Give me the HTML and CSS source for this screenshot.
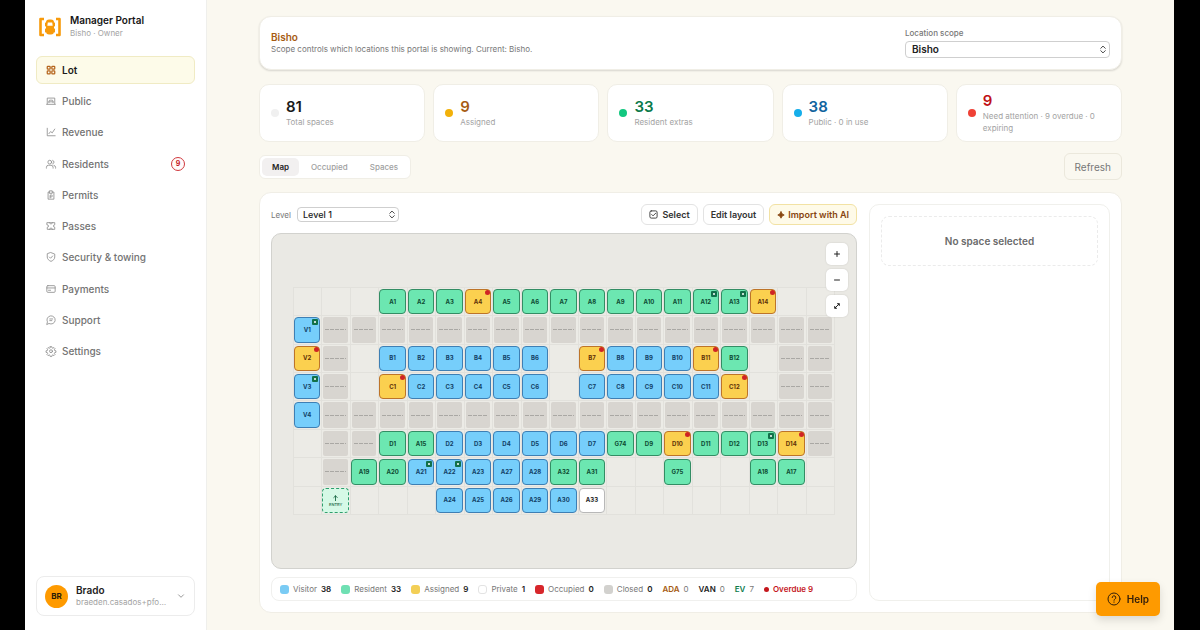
FILE: index.html
```html
<!DOCTYPE html>
<html lang="en">
<head>
<meta charset="utf-8">
<title>Manager Portal</title>
<link rel="stylesheet" href="styles.css">
</head>
<body>
<div class="app">
  <aside class="sidebar">
    <div class="brand">
      <svg class="brand-logo" viewBox="0 0 24 20">
        <path d="M6 2H2.500v16H6M18 2h3.500v16H18" stroke="#f79a0b" stroke-width="2.600" stroke-linecap="butt"/>
        <rect x="8" y="2.500" width="8" height="15" rx="3" fill="#f79a0b" stroke="none"/>
        <path d="M9.800 5.500h4.400l.5 3.200H9.300z" fill="#fff" stroke="none"/>
        <path d="M7.500 6v3M16.500 6v3M7.500 12v3M16.500 12v3" stroke="#f79a0b" stroke-width="1"/>
      </svg>
      <div>
        <div class="brand-name">Manager Portal</div>
        <div class="brand-sub">Bisho · Owner</div>
      </div>
    </div>
    <nav class="nav">
      <a class="nav-item active" href="#lot"><svg class="icon" viewBox="0 0 24 24"><rect x="3" y="3" width="7" height="7" rx="1.500"/><rect x="14" y="3" width="7" height="7" rx="1.500"/><rect x="3" y="14" width="7" height="7" rx="1.500"/><rect x="14" y="14" width="7" height="7" rx="1.500"/></svg>Lot</a>
      <a class="nav-item" href="#public"><svg class="icon" viewBox="0 0 24 24"><path d="M3 19V5h18v14M1.500 20h21"/><path d="M7 16v-3l1.500-3h7l1.500 3v3M7 14h10"/></svg>Public</a>
      <a class="nav-item" href="#revenue"><svg class="icon" viewBox="0 0 24 24"><path d="M3 3v18h19M7 16l4-5 4 3 6-9"/></svg>Revenue</a>
      <a class="nav-item" href="#residents"><svg class="icon" viewBox="0 0 24 24"><circle cx="9" cy="7.500" r="4.500"/><path d="M1 22v-2a5 5 0 0 1 5-5h6a5 5 0 0 1 5 5v2M16 3.200a4.500 4.500 0 0 1 0 8.600M19 15.200a5 5 0 0 1 4 4.800v2"/></svg>Residents<span class="count">9</span></a>
      <a class="nav-item" href="#permits"><svg class="icon" viewBox="0 0 24 24"><path d="M9 5H5v17h14V5h-4M9 2h6v6H9z"/><path d="M10 19v-7h3a2 2 0 0 1 0 4.500h-3"/></svg>Permits</a>
      <a class="nav-item" href="#passes"><svg class="icon" viewBox="0 0 24 24"><path d="M3 4h18v5a3 3 0 0 0 0 6v5H3v-5a3 3 0 0 0 0-6zM8 4c0 4 8 4 8 0M8 20c0-4 8-4 8 0"/></svg>Passes</a>
      <a class="nav-item" href="#security"><svg class="icon" viewBox="0 0 24 24"><path d="M12 1.500l9 3.500v7c0 5-4 8.500-9 10.500C7 20.500 3 17 3 12V5zM8 12l3 3 5-5.500"/></svg>Security &amp; towing</a>
      <a class="nav-item" href="#payments"><svg class="icon" viewBox="0 0 24 24"><rect x="2" y="4" width="20" height="16" rx="2.500"/><path d="M2 9.500h20M6 15h5"/></svg>Payments</a>
      <a class="nav-item" href="#support"><svg class="icon" viewBox="0 0 24 24"><path d="M2 22l1.500-5.500A9.800 9.800 0 1 1 8 20.800zM9 9.500h7M9 13.500h5"/></svg>Support</a>
      <a class="nav-item" href="#settings"><svg class="icon" viewBox="0 0 24 24"><path d="M10.200 1.500h3.600l.7 3.100 1.900.8 2.700-1.700 2.600 2.600-1.700 2.700.8 1.900 3.100.7v3.600l-3.100.7-.8 1.900 1.700 2.700-2.600 2.600-2.700-1.700-1.900.8-.7 3.100h-3.600l-.7-3.100-1.900-.8-2.700 1.700-2.600-2.600L4 17.800l-.8-1.900-3.100-.7v-3.600l3.100-.7L4 9 2.300 6.300l2.600-2.600 2.700 1.700 1.900-.8z"/><circle cx="12" cy="12.500" r="3.500"/></svg>Settings</a>
    </nav>
    <button class="user" type="button">
      <span class="avatar">BR</span>
      <span class="user-text"><span class="user-name">Brado</span><span class="user-mail">braeden.casados+pfo…</span></span>
      <svg class="chev" viewBox="0 0 8 8"><path d="M1.500 2.800L4 5.300l2.500-2.500"/></svg>
    </button>
  </aside>

  <main class="main">
    <section class="card scope">
      <div>
        <h1 class="scope-title">Bisho</h1>
        <p class="scope-text">Scope controls which locations this portal is showing. Current: Bisho.</p>
      </div>
      <div class="scope-field">
        <label for="scope">Location scope</label>
        <div class="select"><select id="scope"><option>Bisho</option></select><svg viewBox="0 0 8 10"><path d="M1.500 3.700L4 1.200l2.500 2.500M1.500 6.300L4 8.800l2.500-2.500"/></svg></div>
      </div>
    </section>

    <section class="stats">
      <div class="stat total"><i class="dot"></i><div><strong>81</strong><span>Total spaces</span></div></div>
      <div class="stat assigned"><i class="dot"></i><div><strong>9</strong><span>Assigned</span></div></div>
      <div class="stat extras"><i class="dot"></i><div><strong>33</strong><span>Resident extras</span></div></div>
      <div class="stat public"><i class="dot"></i><div><strong>38</strong><span>Public · 0 in use</span></div></div>
      <div class="stat attention"><i class="dot"></i><div><strong>9</strong><span>Need attention · 9 overdue · 0 expiring</span></div></div>
    </section>

    <div class="view-row">
      <div class="tabs">
        <button class="tab on" type="button">Map</button>
        <button class="tab" type="button">Occupied</button>
        <button class="tab" type="button">Spaces</button>
      </div>
      <button class="refresh" type="button">Refresh</button>
    </div>

    <section class="lot">
      <div class="lot-left">
        <div class="toolbar">
          <label for="level">Level</label>
          <div class="select level"><select id="level"><option>Level 1</option></select><svg viewBox="0 0 8 10"><path d="M1.500 3.700L4 1.200l2.500 2.500M1.500 6.300L4 8.800l2.500-2.500"/></svg></div>
          <div class="actions">
            <button class="btn" type="button"><svg viewBox="0 0 10 10"><rect x="1" y="1" width="8" height="8" rx="1.500"/><path d="M3 5l1.500 1.500L7.500 3.500"/></svg>Select</button>
            <button class="btn" type="button">Edit layout</button>
            <button class="btn ai" type="button"><svg class="spark" viewBox="0 0 10 10"><path d="M5 1Q5.800 4.200 9 5Q5.800 5.800 5 9Q4.200 5.800 1 5Q4.200 4.200 5 1z"/></svg>Import with AI</button>
          </div>
        </div>
        <div class="map">
          <div class="grid" id="grid"></div>
          <div class="zoom">
            <button type="button" aria-label="Zoom in"><svg viewBox="0 0 8 8"><path d="M4 1.500v5M1.500 4h5"/></svg></button>
            <button type="button" aria-label="Zoom out"><svg viewBox="0 0 8 8"><path d="M1.500 4h5"/></svg></button>
            <button type="button" aria-label="Fit"><svg viewBox="0 0 8 8"><path d="M2 6l4-4M4.500 1.700h1.800v1.800M1.700 4.500v1.800h1.800"/></svg></button>
          </div>
        </div>
        <div class="legend">
          <span><i class="sw visitor"></i>Visitor <b>38</b></span>
          <span><i class="sw resident"></i>Resident <b>33</b></span>
          <span><i class="sw gold"></i>Assigned <b>9</b></span>
          <span><i class="sw private"></i>Private <b>1</b></span>
          <span><i class="sw occupied"></i>Occupied <b>0</b></span>
          <span><i class="sw closed"></i>Closed <b>0</b></span>
          <span><b class="ada">ADA</b> 0</span>
          <span><b>VAN</b> 0</span>
          <span><b class="ev-text">EV</b> 7</span>
          <span class="overdue"><i class="odot"></i>Overdue 9</span>
        </div>
      </div>
      <aside class="detail"><div class="empty">No space selected</div></aside>
    </section>
  </main>
</div>
<button class="help" type="button"><svg viewBox="0 0 14 14"><circle cx="7" cy="7" r="6"/><path d="M5.200 5.600a1.800 1.800 0 1 1 2.600 1.600c-.6.300-.8.500-.8 1.100M7 9.900v.4"/></svg>Help</button>
<script src="map.js"></script>
</body>
</html>
```
FILE: styles.css
```css
* { box-sizing: border-box; }
body {
  margin: 0;
  padding: 0 26px 0 25px;
  background: #000;
  font-family: Inter, "Liberation Sans", sans-serif;
  font-size: 8px;
  line-height: 12px;
  color: #777;
}
button, select { font: inherit; color: inherit; }
h1, p { margin: 0; }
svg { fill: none; stroke: currentColor; stroke-linecap: round; stroke-linejoin: round; flex: none; }
.app { display: flex; min-height: 100vh; background: #faf8f0; }

.sidebar {
  width: 182px;
  flex: none;
  display: flex;
  flex-direction: column;
  padding: 14px 11px;
  background: #fff;
  border-right: 1px solid #efefec;
}
.brand { display: flex; align-items: center; gap: 8px; padding: 0 2px; margin-bottom: 17px; height: 25px; }
.brand-logo { width: 24px; height: 20px; }
.brand-name { font-size: 10px; font-weight: 600; line-height: 13px; color: #161616; }
.brand-sub { line-height: 12px; color: #a3a3a3; }
.nav { display: grid; align-content: space-between; min-height: 309px; }
.nav-item {
  display: flex;
  align-items: center;
  gap: 6px;
  height: 28px;
  padding: 0 9px;
  border: 1px solid transparent;
  border-radius: 6px;
  font-size: 10px;
  font-weight: 500;
  color: #737373;
  text-decoration: none;
}
.nav-item.active { background: #fdfbe9; border-color: #f0ebc4; color: #1c1c1c; font-weight: 600; }
.icon { width: 10px; height: 10px; stroke-width: 2; color: #8d8d8d; overflow: visible; }
.active .icon { color: #b5651d; stroke-width: 3; }
.count {
  margin-left: auto;
  width: 14px;
  height: 14px;
  border: 1px solid #d0393e;
  border-radius: 50%;
  background: #fffafa;
  color: #c4161c;
  font-size: 7px;
  font-weight: 700;
  line-height: 12px;
  text-align: center;
}
.user {
  display: flex;
  align-items: center;
  gap: 8px;
  margin-top: auto;
  height: 40px;
  padding: 0 9px 0 8px;
  border: 1px solid #ececec;
  border-radius: 8px;
  background: #fff;
  text-align: left;
}
.avatar { width: 23px; height: 23px; flex: none; border-radius: 50%; background: #fe9a00; color: #2b1a05; font-size: 8px; font-weight: 700; line-height: 23px; text-align: center; }
.user-text { flex: 1; min-width: 0; display: grid; }
.user-name { font-size: 10px; font-weight: 600; color: #222; }
.user-mail { color: #a3a3a3; white-space: nowrap; }
.chev { width: 8px; height: 8px; color: #999; }

.main { flex: 1; min-width: 0; display: flex; flex-direction: column; padding: 16px 52px 17px; }
.card, .stat, .lot { background: #fff; border: 1px solid #f0eee6; }
.scope {
  display: flex;
  justify-content: space-between;
  align-items: center;
  height: 54px;
  padding: 0 11px;
  border-radius: 12px;
  box-shadow: 0 1px 2px #00000024;
}
.scope-title { font-size: 10px; font-weight: 600; line-height: 12px; color: #a65b12; }
.scope-field { width: 205px; display: grid; gap: 2px; padding-bottom: 2px; font-weight: 500; }
.select { position: relative; }
.select select {
  display: block;
  width: 100%;
  height: 17px;
  padding: 0 6px;
  appearance: none;
  background: #fff;
  border: 1px solid #cfcfcf;
  border-radius: 4px;
  color: #222;
  font-size: 10px;
  font-weight: 600;
}
.select svg { position: absolute; right: 3px; top: 4px; width: 8px; height: 9px; color: #333; pointer-events: none; }

.stats { display: grid; grid-template-columns: repeat(5, 1fr); gap: 8px; margin: 14px 0 11px; }
.stat { display: flex; align-items: center; gap: 7px; height: 58px; padding: 0 11px; border-radius: 10px; color: #a3a3a3; }
.dot { width: 8px; height: 8px; flex: none; border-radius: 50%; }
.stat strong { display: block; font-size: 15px; font-weight: 600; line-height: 18px; }
.stat span { display: block; padding-bottom: 1px; }
.total .dot { background: #f0f0f0; } .total strong { color: #1a1a1a; }
.assigned .dot { background: #f2b10a; } .assigned strong { color: #a65b12; }
.extras .dot { background: #12c77f; } .extras strong { color: #0b7a4b; }
.public .dot { background: #15aeea; } .public strong { color: #10649e; }
.attention .dot { background: #ef4136; } .attention strong { color: #c01015; }

.view-row { display: flex; justify-content: space-between; align-items: center; margin-bottom: 12px; }
.tabs { display: flex; gap: 2px; height: 24px; padding: 2px; border: 1px solid #f0eee6; border-radius: 6px; background: #fff; }
.tab { padding: 0 10px; border: 0; border-radius: 5px; background: none; font-weight: 500; color: #a0a0a0; }
.tab.on { background: #f2f0f0; color: #222; font-weight: 600; }
.refresh { height: 27px; padding: 0 10px; border: 1px solid #ebe8dc; border-radius: 6px; background: none; font-size: 10px; font-weight: 400; color: #777; }

.lot { flex: 1; display: flex; gap: 12px; padding: 11px; border-radius: 12px; }
.lot-left { flex: 1; min-width: 0; display: flex; flex-direction: column; gap: 8px; }
.toolbar { display: flex; align-items: center; gap: 6px; }
.level { width: 102px; }
.level select { height: 15px; padding: 0 5px; font-size: 9px; font-weight: 500; }
.level svg { top: 3px; }
.actions { display: flex; gap: 5px; margin-left: auto; }
.btn { display: flex; align-items: center; gap: 4px; height: 21px; padding: 0 7px; border: 1px solid #e3e3e3; border-radius: 6px; background: #fff; color: #333; font-size: 9px; font-weight: 600; }
.btn svg { width: 9px; height: 9px; }
.btn.ai { gap: 3px; background: #fefae8; border-color: #f2e2a4; color: #87450f; }
.btn .spark { width: 8px; height: 8px; fill: currentColor; }

.map {
  position: relative;
  flex: 1;
  display: flex;
  align-items: center;
  padding: 0 21px;
  background: #eae9e4;
  border: 1px solid #d2d2ce;
  border-radius: 10px;
}
.grid {
  flex: 1;
  aspect-ratio: 19 / 8;
  display: grid;
  grid-template-columns: repeat(19, 1fr);
  grid-template-rows: repeat(8, 1fr);
  border: solid #e2e1dc;
  border-width: 1px 0 0 1px;
  background: #ecebe6;
}
.cell { position: relative; padding: 1px 1px 1px 0; border: solid #e2e1dc; border-width: 0 1px 1px 0; display: grid; min-width: 0; min-height: 0; }
.space {
  padding: 0;
  border: 1px solid;
  border-radius: 4px;
  font-size: 6px;
  font-weight: 700;
  line-height: 8px;
  text-align: center;
}
.space.v { background: #76cefb; border-color: #3e7fb4; color: #123f66; }
.space.r { background: #6ce7b1; border-color: #338d64; color: #0d4a33; }
.space.a { background: #fbd04f; border-color: #bd7429; color: #5f3208; }
.space.p { background: #fff; border-color: #b8b8b8; color: #222; }
.space.entry { background: #d5f9e6; border: 1px dashed #2e9e6c; color: #14633f; font-size: 4px; font-weight: 500; line-height: 5px; }
.entry svg { display: block; width: 7px; height: 8px; margin: 0 auto; stroke-width: 1; }
.road { margin: 0 1px; border-radius: 2px; background: #d8d5d0; display: grid; align-items: center; padding: 0 2px; }
.road::before { content: ""; height: 1px; background: repeating-linear-gradient(90deg, #aaa8a4 0 4px, transparent 4px 5px); }
.badge-ev { position: absolute; top: 3px; right: 3px; width: 6px; height: 6px; border-radius: 1px; background: #12704a; display: grid; place-items: center; }
.badge-ev::before { content: ""; width: 2px; height: 2px; border-radius: 50%; background: #fff; }
.badge-due { position: absolute; top: 2px; right: 2px; width: 5px; height: 5px; border-radius: 50%; background: #cf2424; }
.zoom { position: absolute; top: 9px; right: 8px; display: grid; gap: 4px; }
.zoom button { width: 22px; height: 22px; padding: 0; display: grid; place-items: center; border: 0; border-radius: 5px; background: #fff; color: #222; box-shadow: 0 0 2px #0002; }
.zoom svg { width: 8px; height: 8px; stroke-width: 1; }

.legend { display: flex; align-items: center; gap: 10px; height: 24px; padding: 0 8px; border: 1px solid #f0f0ee; border-radius: 8px; white-space: nowrap; }
.legend span { display: flex; align-items: center; gap: 4px; }
.legend b { font-weight: 600; color: #222; }
.sw { width: 9px; height: 9px; border-radius: 3px; }
.visitor { background: #7acbf4; } .resident { background: #6fe0b3; } .gold { background: #f3cf56; }
.private { border: 1px solid #e3e3e3; } .occupied { background: #d7262b; } .closed { background: #d2d1ce; }
.odot { width: 5px; height: 5px; border-radius: 50%; background: #c4161c; }
.legend .ada { color: #a65b12; } .legend .ev-text { color: #0b7a4b; }
.legend .overdue { color: #c4161c; font-weight: 600; }
.detail { width: 241px; flex: none; padding: 11px; border: 1px solid #f0f0ec; border-radius: 10px; }
.empty { display: grid; place-items: center; height: 50px; border: 1px dashed #ebebeb; border-radius: 8px; font-size: 10px; font-weight: 600; color: #6a6a6a; }

.help {
  position: fixed;
  right: 40px;
  bottom: 14px;
  display: flex;
  align-items: center;
  gap: 6px;
  height: 34px;
  padding: 0 11px;
  border: 0;
  border-radius: 5px;
  background: #fe9a00;
  color: #35200a;
  font-size: 10px;
  font-weight: 600;
  box-shadow: 0 4px 8px #00000020;
}
.help svg { width: 14px; height: 14px; }
```
FILE: map.js
```js
// One string per row; a token is a space, "#" a drive lane, "." an empty cell.
// Suffix: v visitor, r resident, a assigned (overdue), p private; "+" marks EV charging.
const rows = [
  ". . . A1r A2r A3r A4a A5r A6r A7r A8r A9r A10r A11r A12r+ A13r+ A14a . .",
  "V1v+ # # # # # # # # # # # # # # # # # #",
  "V2a # . B1v B2v B3v B4v B5v B6v . B7a B8v B9v B10v B11a B12r . # #",
  "V3v+ # . C1a C2v C3v C4v C5v C6v . C7v C8v C9v C10v C11v C12a . # #",
  "V4v # # # # # # # # # # # # # # # # # #",
  ". # # D1r A15r D2v D3v D4v D5v D6v D7v G74r D9r D10a D11r D12r D13r+ D14a #",
  ". # A19r A20r A21v+ A22v+ A23v A27v A28v A32r A31r . . G75r . . A18r A17r .",
  ". E . . . A24v A25v A26v A29v A30v A33p . . . . . . . ."
];
const arrow = '<svg viewBox="0 0 8 8"><path d="M4 7V1.500M2 3.500L4 1.500l2 2"/></svg>';

function cell(token) {
  if (token === ".") return "";
  if (token === "#") return '<div class="road"></div>';
  if (token === "E") return '<button type="button" class="space entry">' + arrow + "ENTRY</button>";
  const [, name, kind, ev] = token.match(/^([A-Z]\d+)([vrap])(\+?)$/);
  const badge = ev ? '<i class="badge-ev"></i>' : kind === "a" ? '<i class="badge-due"></i>' : "";
  return `<button type="button" class="space ${kind}">${name}</button>${badge}`;
}

document.getElementById("grid").innerHTML = rows
  .flatMap(row => row.split(" "))
  .map(token => `<div class="cell">${cell(token)}</div>`)
  .join("");
```
